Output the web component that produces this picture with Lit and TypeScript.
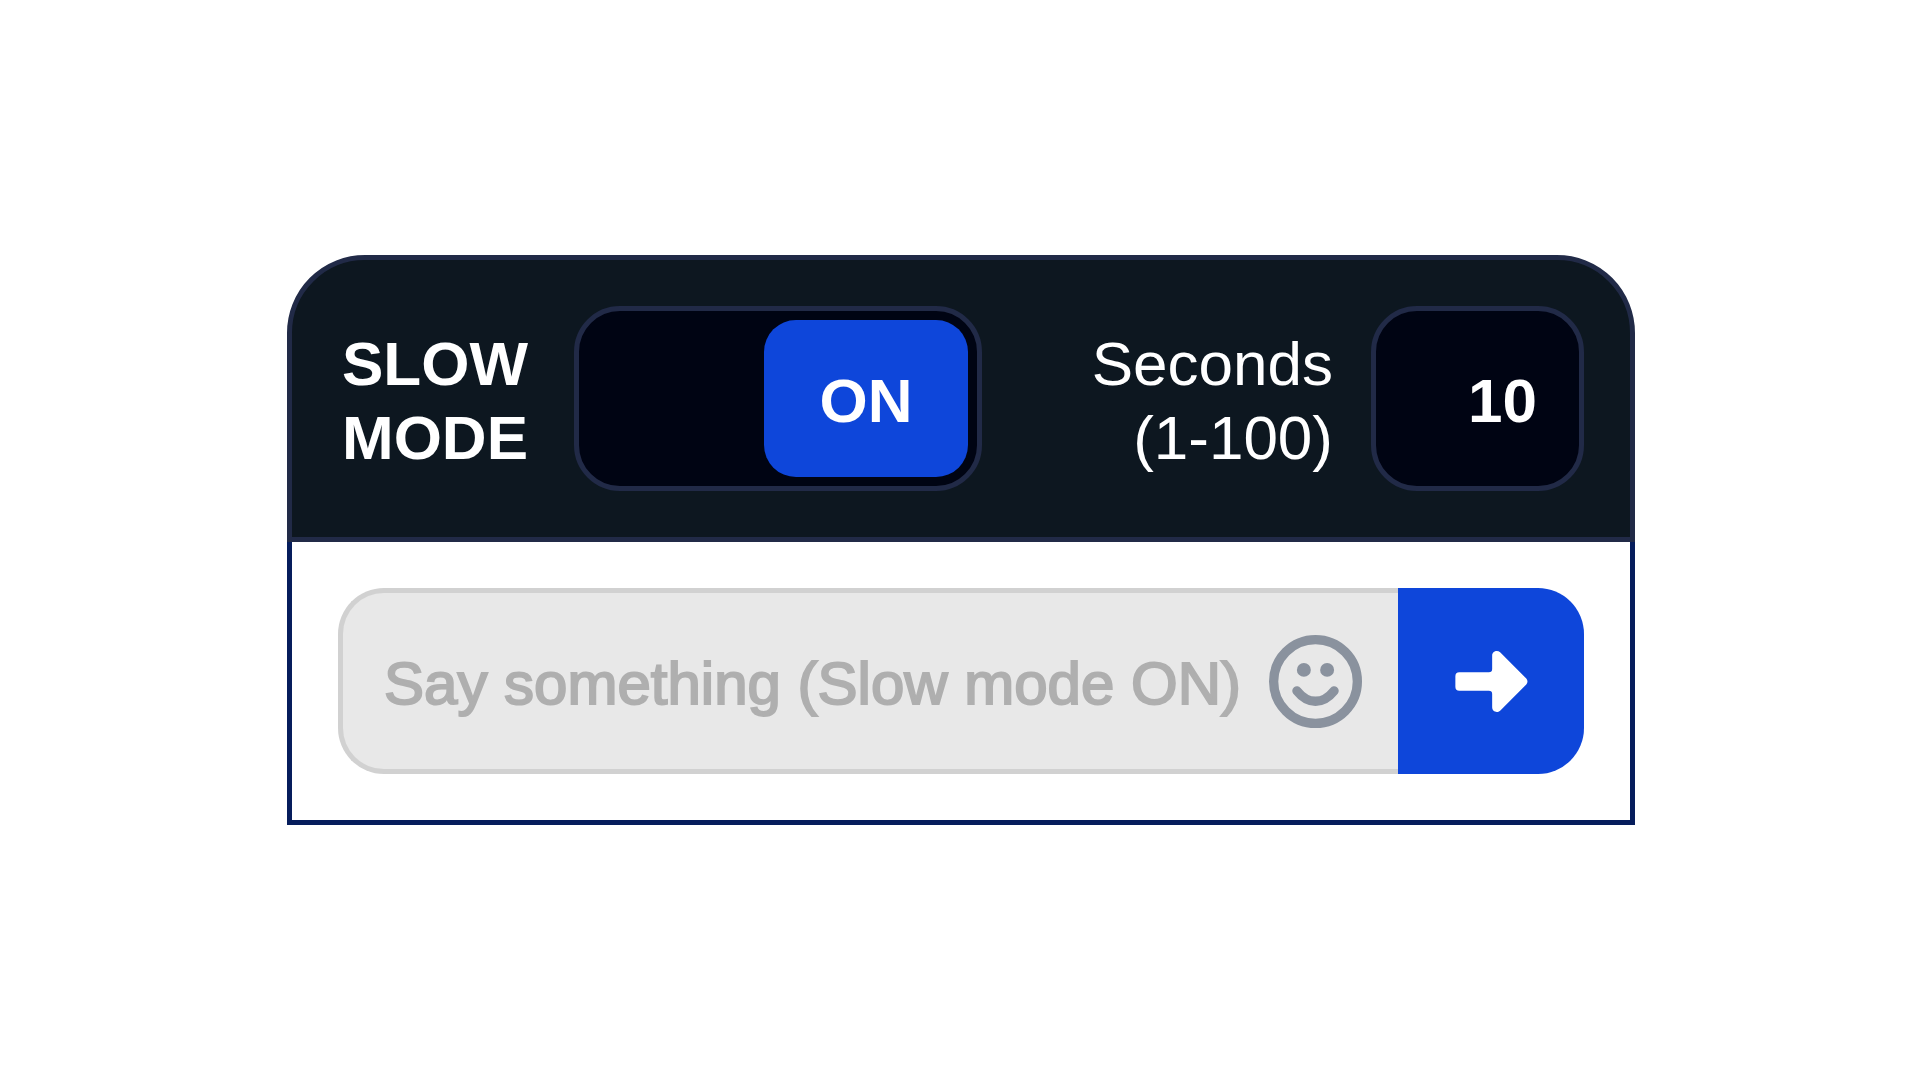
import { LitElement, html, css } from "lit";
import { customElement, state } from "lit/decorators.js";

@customElement("app-root")
export class AppRoot extends LitElement {
  @state() private slow = true;
  @state() private seconds = 10;
  @state() private message = "";

  static styles = css`
    :host {
      display: block;
      box-sizing: border-box;
      min-height: 100vh;
      padding: 255px 285px 255px 287px;
      background: #fff;
      font-family: "Liberation Sans", Arial, sans-serif;
      font-size: 62px;
      line-height: 74px;
    }
    * {
      box-sizing: border-box;
    }
    input,
    button {
      margin: 0;
      padding: 0;
      border: 0;
      background: none;
      font: inherit;
      color: inherit;
      appearance: none;
    }
    svg {
      display: block;
    }
    .settings {
      display: flex;
      align-items: center;
      justify-content: space-between;
      padding: 46px 46px 46px 50px;
      border: 5px solid #212a47;
      border-radius: 78px 78px 0 0;
      background: #0d1720;
      color: #fff;
    }
    .group {
      display: flex;
      align-items: center;
    }
    .mode {
      gap: 46px;
      font-weight: 700;
    }
    .delay {
      gap: 38px;
    }
    .caption {
      width: min-content;
      padding-top: 4px;
    }
    .delay .caption {
      text-align: right;
    }
    .line {
      display: block;
      white-space: nowrap;
    }
    .switch {
      display: grid;
      grid-template-columns: 1fr 1fr;
      width: 408px;
      height: 185px;
    }
    .track {
      grid-area: 1 / 1 / 2 / 3;
      border: 5px solid #212a47;
      border-radius: 46px;
      background: #000413;
      cursor: pointer;
    }
    .thumb {
      grid-area: 1 / 1 / 2 / 2;
      display: flex;
      align-items: center;
      justify-content: center;
      margin: 14px 0 14px 14px;
      padding-top: 4px;
      border-radius: 32px;
      background: #343e5c;
      pointer-events: none;
    }
    .thumb.on {
      grid-area: 1 / 2 / 2 / 3;
      margin: 14px 14px 14px -14px;
      background: #0e46da;
    }
    .seconds {
      width: 213px;
      height: 185px;
      padding: 4px 42px 0 20px;
      border: 5px solid #212a47;
      border-radius: 46px;
      background: #000413;
      font-weight: 700;
      text-align: right;
      appearance: textfield;
    }
    .seconds::-webkit-inner-spin-button {
      display: none;
    }
    .composer {
      display: flex;
      padding: 46px;
      border: 5px solid #061d5c;
      border-top: 0;
      background: #fff;
    }
    .field {
      flex: 1;
      min-width: 0;
      display: flex;
      align-items: center;
      gap: 24px;
      height: 186px;
      padding: 0 36px 0 41px;
      border: 5px solid #d1d1d1;
      border-right: 0;
      border-radius: 46px 0 0 46px;
      background: #e8e8e8;
    }
    .message {
      flex: 1;
      min-width: 0;
      height: 78px;
      padding-top: 4px;
      font-size: 60px;
      color: #333a44;
      -webkit-text-stroke: 2px currentColor;
    }
    .message::placeholder {
      color: #afafaf;
      opacity: 1;
    }
    .emoji {
      color: #8a929e;
      cursor: pointer;
    }
    .send {
      display: flex;
      align-items: center;
      justify-content: center;
      width: 186px;
      border-radius: 0 46px 46px 0;
      background: #0e46da;
      color: #fff;
      cursor: pointer;
    }
  `;

  render() {
    const label = this.slow ? "ON" : "OFF";
    return html`
      <section class="settings">
        <div class="group mode">
          <label class="caption" for="slow">
            <span class="line">SLOW</span>
            <span class="line">MODE</span>
          </label>
          <div class="switch">
            <input
              id="slow"
              class="track"
              type="checkbox"
              role="switch"
              .checked=${this.slow}
              @change=${(e: Event) => (this.slow = (e.target as HTMLInputElement).checked)}
            />
            <span class="thumb ${this.slow ? "on" : ""}">${label}</span>
          </div>
        </div>
        <div class="group delay">
          <label class="caption" for="seconds">
            <span class="line">Seconds</span>
            <span class="line">(1-100)</span>
          </label>
          <input
            id="seconds"
            class="seconds"
            type="number"
            min="1"
            max="100"
            .value=${String(this.seconds)}
            @change=${(e: Event) => (this.seconds = Number((e.target as HTMLInputElement).value))}
          />
        </div>
      </section>
      <form class="composer" @submit=${this.submit}>
        <div class="field">
          <input
            class="message"
            type="text"
            aria-label="Message"
            placeholder="Say something (Slow mode ${label})"
            .value=${this.message}
            @input=${(e: Event) => (this.message = (e.target as HTMLInputElement).value)}
          />
          <button class="emoji" type="button" aria-label="Emoji">
            <svg width="93" height="93" viewBox="-10 -10 20 20" fill="none" aria-hidden="true">
              <circle r="9" stroke="currentColor" stroke-width="2" />
              <circle cx="-2.5" cy="-2.5" r="1.5" fill="currentColor" />
              <circle cx="2.5" cy="-2.5" r="1.5" fill="currentColor" />
              <path
                d="M-4 2C-1.6 5 1.6 5 4 2"
                stroke="currentColor"
                stroke-width="2"
                stroke-linecap="round"
              />
            </svg>
          </button>
        </div>
        <button class="send" type="submit" aria-label="Send">
          <svg width="73" height="61" viewBox="72 63 218 184" fill="currentColor" aria-hidden="true">
            <path
              d="M84 127H173Q183 127 183 117V77C183 64 198 59 207 67L286 146Q293 155 286 164L207 243C198 251 183 246 183 233V193Q183 183 173 183H84Q72 183 72 171V139Q72 127 84 127Z"
            />
          </svg>
        </button>
      </form>
    `;
  }

  private submit(e: Event) {
    e.preventDefault();
    this.message = "";
  }
}
